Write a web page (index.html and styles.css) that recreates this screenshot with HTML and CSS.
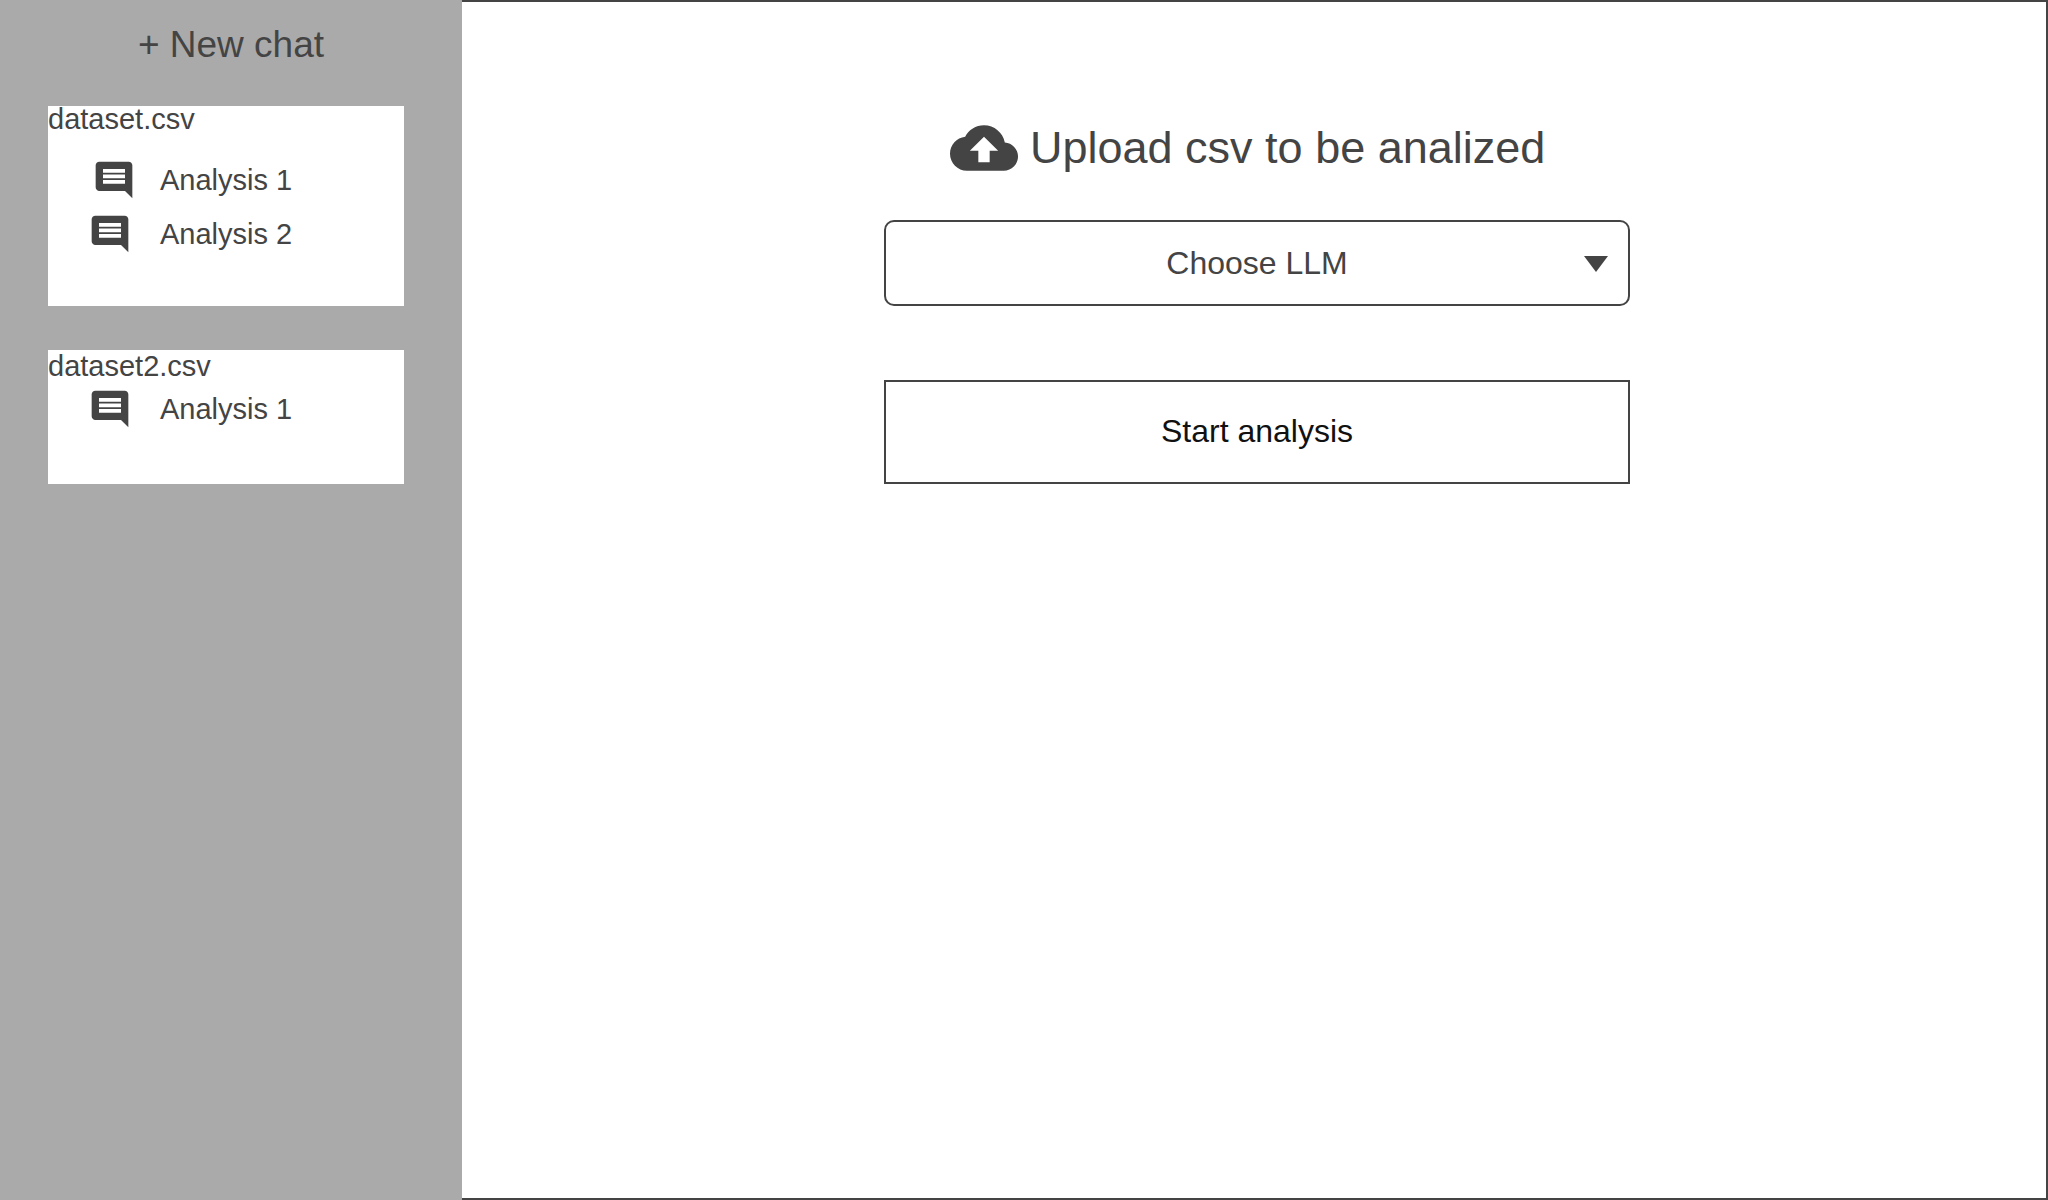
FILE: index.html
```html
<!DOCTYPE html>
<html lang="en">
<head>
  <meta charset="utf-8">
  <meta name="viewport" content="width=device-width, initial-scale=1">
  <title>CSV analysis</title>
  <link rel="stylesheet" href="styles.css">
</head>
<body>
  <svg class="sprite" aria-hidden="true">
    <symbol id="comment" viewBox="0 0 24 24">
      <path d="M20 2H4c-1.1 0-2 .9-2 2v12c0 1.1.9 2 2 2h14l4 4V4c0-1.1-.9-2-2-2zm-2 12H6v-2h12v2zm0-3H6V9h12v2zm0-3H6V6h12v2z"/>
    </symbol>
  </svg>
  <div class="app">
    <aside class="sidebar">
      <button class="new-chat" type="button">+ New chat</button>
      <nav class="datasets" aria-label="Datasets">
        <section class="dataset">
          <h2 class="dataset-name">dataset.csv</h2>
          <ul class="chats">
            <li><a class="chat chat-current" href="#d1-a1"><svg class="chat-icon" aria-hidden="true"><use href="#comment"/></svg><span>Analysis 1</span></a></li>
            <li><a class="chat" href="#d1-a2"><svg class="chat-icon" aria-hidden="true"><use href="#comment"/></svg><span>Analysis 2</span></a></li>
          </ul>
        </section>
        <section class="dataset dataset-compact">
          <h2 class="dataset-name">dataset2.csv</h2>
          <ul class="chats">
            <li><a class="chat" href="#d2-a1"><svg class="chat-icon" aria-hidden="true"><use href="#comment"/></svg><span>Analysis 1</span></a></li>
          </ul>
        </section>
      </nav>
    </aside>
    <main class="main">
      <form class="setup">
        <label class="upload" for="csv">
          <svg class="upload-icon" viewBox="0 0 24 24" aria-hidden="true">
            <path d="M19.35 10.04C18.67 6.59 15.64 4 12 4 9.11 4 6.6 5.64 5.35 8.04 2.34 8.36 0 10.91 0 14c0 3.31 2.69 6 6 6h13c2.76 0 5-2.24 5-5 0-2.64-2.05-4.78-4.65-4.96zM14 13v4h-4v-4H7l5-5 5 5h-3z"/>
          </svg>
          <span>Upload csv to be analized</span>
        </label>
        <input class="upload-input" id="csv" type="file" accept=".csv">
        <div class="model">
          <select class="model-select" aria-label="Choose LLM">
            <option>Choose LLM</option>
          </select>
          <svg class="model-arrow" viewBox="0 0 24 16" aria-hidden="true"><path d="M0 0h24L12 16z"/></svg>
        </div>
        <button class="start" type="button">Start analysis</button>
      </form>
    </main>
  </div>
</body>
</html>
```
FILE: styles.css
```css
* {
  box-sizing: border-box;
}

body {
  margin: 0;
  background: #fff;
  color: #444;
  font-family: "Liberation Sans", Arial, sans-serif;
  font-size: 29px;
}

button,
select {
  font-family: inherit;
  color: inherit;
  cursor: pointer;
}

svg {
  display: block;
  fill: #444;
}

.sprite {
  display: none;
}

.app {
  display: flex;
  min-height: 100vh;
}

/* Sidebar */

.sidebar {
  flex: 0 0 462px;
  padding: 21px 58px 20px 48px;
  background: #aaa;
}

.new-chat {
  display: block;
  width: 100%;
  margin: 0 0 37px;
  padding: 0 0 0 10px;
  border: 0;
  background: none;
  font-size: 37px;
  line-height: 48px;
}

.datasets {
  display: grid;
  gap: 44px;
}

.dataset {
  padding-bottom: 45px;
  background: #fff;
}

.dataset-name {
  margin: 0 0 21px;
  font-size: 29px;
  font-weight: 400;
  line-height: 26px;
}

.dataset-compact {
  padding-bottom: 48px;
}

.dataset-compact .dataset-name {
  margin: 0;
  line-height: 32px;
}

.chats {
  margin: 0;
  padding: 0;
  list-style: none;
}

.chat {
  display: grid;
  grid-template-columns: 48px 1fr;
  column-gap: 24px;
  align-items: center;
  height: 54px;
  padding-left: 40px;
  color: inherit;
  text-decoration: none;
}

.chat-icon {
  width: 44px;
  height: 44px;
}

.chat-current .chat-icon {
  justify-self: end;
}

/* Main panel */

.main {
  flex: 1;
  padding: 112px 0 40px 6px;
  border: 2px solid #444;
  border-left: 0;
}

.setup {
  position: relative;
  width: 100%;
  max-width: 746px;
  margin: 0 auto;
}

.upload {
  display: flex;
  align-items: center;
  gap: 12px;
  margin-bottom: 38px;
  padding-left: 66px;
  font-size: 45px;
  line-height: 52px;
  white-space: nowrap;
  cursor: pointer;
}

.upload-icon {
  width: 68px;
  height: 68px;
}

.upload-input {
  position: absolute;
  width: 1px;
  height: 1px;
  opacity: 0;
  overflow: hidden;
}

.model {
  position: relative;
  margin-bottom: 74px;
}

.model-select {
  display: block;
  width: 100%;
  height: 86px;
  padding: 0;
  border: 2px solid #444;
  border-radius: 10px;
  background: #fff;
  font-size: 32px;
  text-align: center;
  text-align-last: center;
  appearance: none;
}

.model-arrow {
  position: absolute;
  top: 36px;
  right: 22px;
  width: 24px;
  height: 16px;
  pointer-events: none;
}

.start {
  display: block;
  width: 100%;
  height: 104px;
  padding: 0 0 2px;
  border: 2px solid #444;
  background: #fff;
  color: #111;
  font-size: 32px;
}
```
